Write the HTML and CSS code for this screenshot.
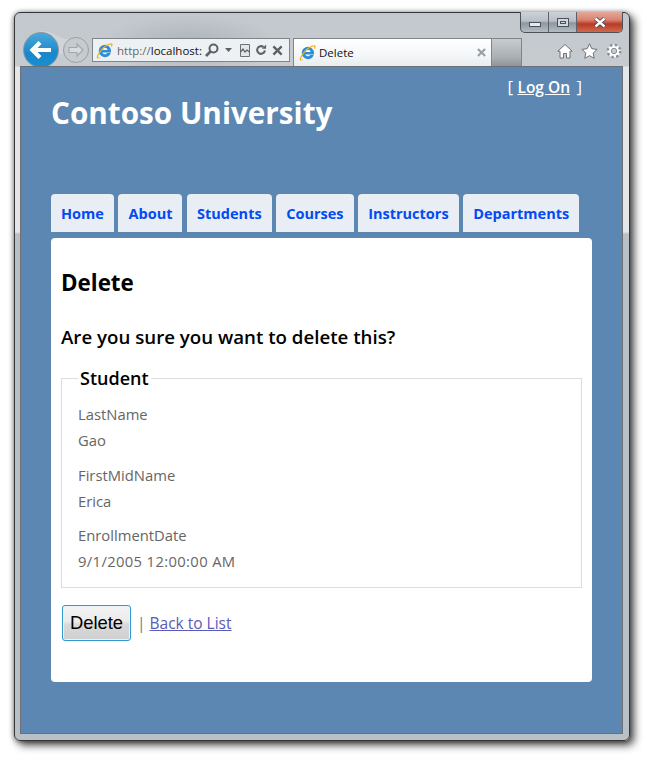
FILE: index.html
```html
<!DOCTYPE html>
<html lang="en">
<head>
<meta charset="utf-8">
<title>Delete</title>
<link rel="stylesheet" href="styles.css">
</head>
<body>
<svg class="defs" width="0" height="0">
  <symbol id="ie" viewBox="0 0 17 17">
    <path d="M9 2.800a6.200 6.200 0 1 0 5.800 8.200h-3.600a2.900 2.900 0 0 1-5-.6h8.800V9a6 6 0 0 0-6-6.200zM6.200 8a2.800 2.800 0 0 1 5.500 0z" fill="#2f8fd4"/>
    <path d="M1 16.200C-.3 14 5 6 10 3.200c3.300-1.900 6-2.500 6.500-1.300.4.900-.5 2.200-1.600 3.500.3-1.200.5-2.100.1-2.500C14 1.700 9.800 4.200 6.500 7.700 3.800 10.700 1.600 14 2.200 15.200c.5.800 1.700.5 3 0-1.900 1.200-3.500 1.900-4.200 1z" fill="#f2b01e"/>
  </symbol>
</svg>
<div class="window">
  <div class="controls">
    <span class="ctl"><span class="glyph-min"></span></span>
    <span class="ctl"><span class="glyph-max"></span></span>
    <span class="ctl ctl-close">
      <svg width="14" height="11" viewBox="0 0 14 11"><path d="M2.500 1.500l9 8M11.500 1.500l-9 8" stroke="#3b3f46" stroke-width="4"/><path d="M2.500 1.500l9 8M11.500 1.500l-9 8" stroke="#fff" stroke-width="2.400"/></svg>
    </span>
  </div>
  <header class="chrome">
    <div class="nav-buttons">
      <svg class="nav-tail" width="40" height="24" viewBox="0 0 40 24"><path d="M0 0c14 0 18 7 26 8 5 .6 9 3 12 8L20 24z" fill="#d3d7db" opacity=".8"/></svg>
      <div class="forward">
        <svg width="18" height="16" viewBox="0 0 18 16"><path d="M10 2l6 6-6 6v-3.500H2v-5h8z" fill="#d8dbdf" stroke="#a3a8ad" stroke-width="1.200"/></svg>
      </div>
      <div class="back">
        <svg width="24" height="20" viewBox="0 0 24 20"><path d="M11 2.500L3.500 10l7.500 7.500M4 10h18" fill="none" stroke="#fff" stroke-width="4.200"/></svg>
      </div>
    </div>
    <div class="address">
      <svg class="ie" width="17" height="17"><use href="#ie"/></svg>
      <span class="url"><span class="scheme">http://</span>localhost:</span>
      <svg class="addr-icon" width="14" height="14" viewBox="0 0 14 14"><circle cx="8.500" cy="5.500" r="4" fill="none" stroke="#5d6268" stroke-width="2"/><path d="M5.500 8.500L1 13" stroke="#5d6268" stroke-width="2.600"/></svg>
      <svg class="addr-caret" width="7" height="4" viewBox="0 0 7 4"><path d="M0 0h7L3.500 4z" fill="#5d6268"/></svg>
      <svg class="addr-compat" width="10" height="13" viewBox="0 0 10 13"><path d="M.5.500h9v12h-9z" fill="#e4e6e8" stroke="#6c7177"/><path d="M.5 8l2.500-3 2 3 2-2 2.500 2" fill="none" stroke="#5d6268" stroke-width="1.300"/></svg>
      <svg class="addr-refresh" width="12" height="12" viewBox="0 0 14 14"><path d="M11.500 7.500a4.500 4.500 0 1 1-1.600-4" fill="none" stroke="#5d6268" stroke-width="2.400"/><path d="M8 5.500h5v-5z" fill="#5d6268"/></svg>
      <svg class="addr-stop" width="11" height="11" viewBox="0 0 12 12"><path d="M1.500 1.500l9 9M10.500 1.500l-9 9" stroke="#5d6268" stroke-width="2.600"/></svg>
    </div>
    <div class="tab">
      <svg class="ie" width="17" height="17"><use href="#ie"/></svg>
      <span class="tab-title">Delete</span>
      <svg class="tab-close" width="9" height="9" viewBox="0 0 10 10"><path d="M1 1l8 8M9 1l-8 8" stroke="#9a9fa4" stroke-width="2.400"/></svg>
    </div>
    <div class="new-tab"></div>
    <div class="tools">
      <svg width="16" height="16" viewBox="0 0 16 16"><path d="M8 1.500L.8 8.200h2.200V15h3.500v-4.500h3V15H13V8.200h2.200z" fill="#fff" stroke="#6c7177"/></svg>
      <svg width="17" height="16" viewBox="0 0 17 16"><path d="M8.500.8l2.300 4.900 5.300.7-3.900 3.600 1 5.300-4.700-2.600-4.700 2.600 1-5.300L.9 6.400l5.300-.7z" fill="#fff" stroke="#6c7177"/></svg>
      <svg width="16" height="16" viewBox="0 0 16 16"><circle cx="8" cy="8" r="4.500" fill="none" stroke="#fff" stroke-width="4"/><circle cx="8" cy="8" r="6.200" fill="none" stroke="#8a8f95" stroke-width="2.400" stroke-dasharray="2.400 2.470"/><circle cx="8" cy="8" r="2.700" fill="none" stroke="#8a8f95"/></svg>
    </div>
  </header>
  <div class="page">
    <div class="site-header">
      <h1 class="site-title">Contoso University</h1>
      <div class="login">[ <a href="#">Log On</a> ]</div>
    </div>
    <nav class="menu">
      <a href="#">Home</a>
      <a href="#">About</a>
      <a href="#">Students</a>
      <a href="#">Courses</a>
      <a href="#">Instructors</a>
      <a href="#">Departments</a>
    </nav>
    <main class="main">
      <h2 class="heading">Delete</h2>
      <h3 class="question">Are you sure you want to delete this?</h3>
      <fieldset class="record">
        <legend>Student</legend>
        <div class="field"><div>LastName</div><div>Gao</div></div>
        <div class="field"><div>FirstMidName</div><div>Erica</div></div>
        <div class="field"><div>EnrollmentDate</div><div class="date">9/1/2005 12:00:00 AM</div></div>
      </fieldset>
      <div class="actions">
        <button class="delete" type="button">Delete</button>
        <span class="sep">|</span>
        <a class="back-link" href="#">Back to List</a>
      </div>
    </main>
  </div>
</div>
</body>
</html>
```
FILE: styles.css
```css
* { box-sizing: border-box; }
html, body { margin: 0; padding: 0; background: #fff; }
body { width: 647px; height: 759px; overflow: hidden; font-family: "Open Sans", sans-serif; }
.defs { position: absolute; }

.window {
  position: relative;
  width: 616px;
  height: 729px;
  margin: 12px 0 0 14px;
  padding: 0 6px 6px 5px;
  border: 1px solid #34373a;
  border-radius: 6px;
  background:
    radial-gradient(ellipse 90px 30px at 175px 32px, rgba(150,158,166,.55), rgba(150,158,166,0)),
    linear-gradient(180deg, #c3c8ce 0, #c6cbd0 53px, #e4e6e8 54px, #e4e6e8 219px, #b9c1c7 221px, #b9c1c7 100%);
  box-shadow: 4px 4px 9px rgba(0,0,0,.72), -1px 1px 5px rgba(0,0,0,.3), 0 -1px 4px rgba(0,0,0,.12);
}

.controls {
  position: absolute;
  top: -1px;
  right: 6px;
  width: 103px;
  height: 21px;
  display: flex;
  border: 1px solid #4c5258;
  border-top: 0;
  border-radius: 0 0 5px 5px;
  overflow: hidden;
  background: linear-gradient(180deg, #cdd2d7 0, #b9c0c7 45%, #8e979f 55%, #b4bcc3 100%);
}
.ctl { width: 28px; display: flex; align-items: center; justify-content: center; border-right: 1px solid #5c636a; }
.ctl-close { flex: 1; border: 0; background: linear-gradient(180deg, #e6a79b 0, #d88272 40%, #b93b22 60%, #cd6a52 100%); }
.glyph-min { width: 12px; height: 5px; margin-top: 5px; background: #e8ebee; border: 1px solid #4b5158; }
.glyph-max { width: 12px; height: 9px; background: #d4d8dc; border: 1px solid #4b5158; box-shadow: inset 0 0 0 2px #d4d8dc, inset 0 0 0 3px #4b5158; }

.chrome { position: relative; display: flex; height: 53px; align-items: flex-start; padding: 25px 0 0 0; }
.nav-buttons { position: relative; width: 72px; height: 26px; flex: none; }
.nav-tail { position: absolute; left: 20px; top: -7px; }
.back {
  position: absolute;
  left: 3px;
  top: -6px;
  width: 36px;
  height: 36px;
  border-radius: 50%;
  display: flex; align-items: center; justify-content: center;
  border: 1px solid #8796a3;
  background: linear-gradient(180deg, #4aa9dc 0, #1a87c9 60%, #1590d2 100%);
}
.forward {
  position: absolute;
  left: 43px;
  top: -1px;
  width: 26px;
  height: 26px;
  border-radius: 50%;
  display: flex; align-items: center; justify-content: center;
  border: 1px solid #9aa0a6;
  background: #c6cbd0;
}
.address {
  display: flex;
  align-items: center;
  width: 198px;
  height: 24px;
  flex: none;
  padding: 0 6px 0 3px;
  border: 1px solid #7f858b;
  background: #eef1f4;
}
.ie { flex: none; }
.url { width: 88px; margin-left: 4px; flex: none; overflow: hidden; white-space: nowrap; font-size: 11.500px; color: #111; }
.scheme { color: #666; }
.addr-icon { flex: none; }
.addr-caret { flex: none; margin: 0 8px 0 6px; }
.addr-compat { flex: none; margin-right: 5px; }
.addr-refresh { flex: none; margin-right: 5px; }
.addr-stop { flex: none; }
.tab {
  display: flex;
  align-items: center;
  width: 199px;
  height: 28px;
  margin-left: 3px;
  flex: none;
  padding: 0 5px 1px 5px;
  border: 1px solid #7f858b;
  border-bottom: 0;
  background: linear-gradient(180deg, #fff 0, #f4f6f8 60%, #e9ecef 100%);
}
.tab-title { flex: 1; margin-left: 3px; font-size: 11.500px; color: #111; }
.new-tab {
  width: 30px;
  height: 28px;
  flex: none;
  border: 1px solid #7f858b;
  border-left: 0;
  border-bottom: 0;
  background: linear-gradient(180deg, #c7ccd1 0, #a9aeb3 70%, #8f9499 100%);
}
.tools { display: flex; gap: 8px; margin-left: 35px; margin-top: 5px; flex: none; }

.page {
  position: relative;
  height: 668px;
  padding: 0 30px;
  border: 1px solid #6c7075;
  background: #5c87b2;
}
.site-header { position: relative; height: 127px; padding-top: 27px; }
.site-title { margin: 0; font-size: 29.700px; line-height: 38px; font-weight: 700; color: #fff; }
.login { position: absolute; top: 9px; right: 10px; font-size: 17px; line-height: 22px; color: #fff; font-weight: 400; }
.login a { margin-right: 2px; color: #fff; font-size: 15.500px; font-weight: 600; }

.menu { display: flex; gap: 4.600px; height: 38px; }
.menu a {
  display: flex;
  align-items: center;
  height: 38px;
  padding: 0 10px;
  border-radius: 4px 4px 0 0;
  background: #e8eef4;
  color: #034af3;
  font-size: 14.500px;
  font-weight: 700;
  text-decoration: none;
}
.main {
  width: 541px;
  height: 444px;
  margin-top: 6px;
  padding: 29px 10px 0;
  border-radius: 4px;
  background: #fff;
}
.heading { margin: 0; font-size: 22.400px; line-height: 32px; font-weight: 700; color: #000; }
.question { margin: 26px 0 0; font-size: 18.700px; line-height: 24px; font-weight: 600; color: #000; }
.record {
  margin: 16px 0 0;
  padding: 10px 16px 0;
  height: 223px;
  border: 1px solid #ddd;
  min-width: 0;
}
.record legend { padding: 0 2px 0 2px; font-size: 18px; line-height: 26px; font-weight: 600; color: #000; }
.field { margin-bottom: 8.500px; font-size: 14.800px; line-height: 26px; color: #666; }
.date { letter-spacing: .35px; }
.actions { display: flex; align-items: center; margin: 17px 0 0 1px; color: #777; font-size: 15.500px; }
.delete {
  width: 69px;
  height: 36px;
  padding: 0;
  border: 1px solid #2e9ad0;
  border-radius: 3px;
  background: linear-gradient(180deg, #f3f3f3 0, #ebebeb 45%, #d9d9d9 55%, #cfcfcf 100%);
  box-shadow: inset 0 0 0 1px #e9f5fb;
  font-family: "Liberation Sans", Arial, sans-serif;
  font-size: 18.400px;
  color: #000;
}
.sep { margin: 0 4px 0 6px; }
.back-link { color: #5a5ab8; }
```
